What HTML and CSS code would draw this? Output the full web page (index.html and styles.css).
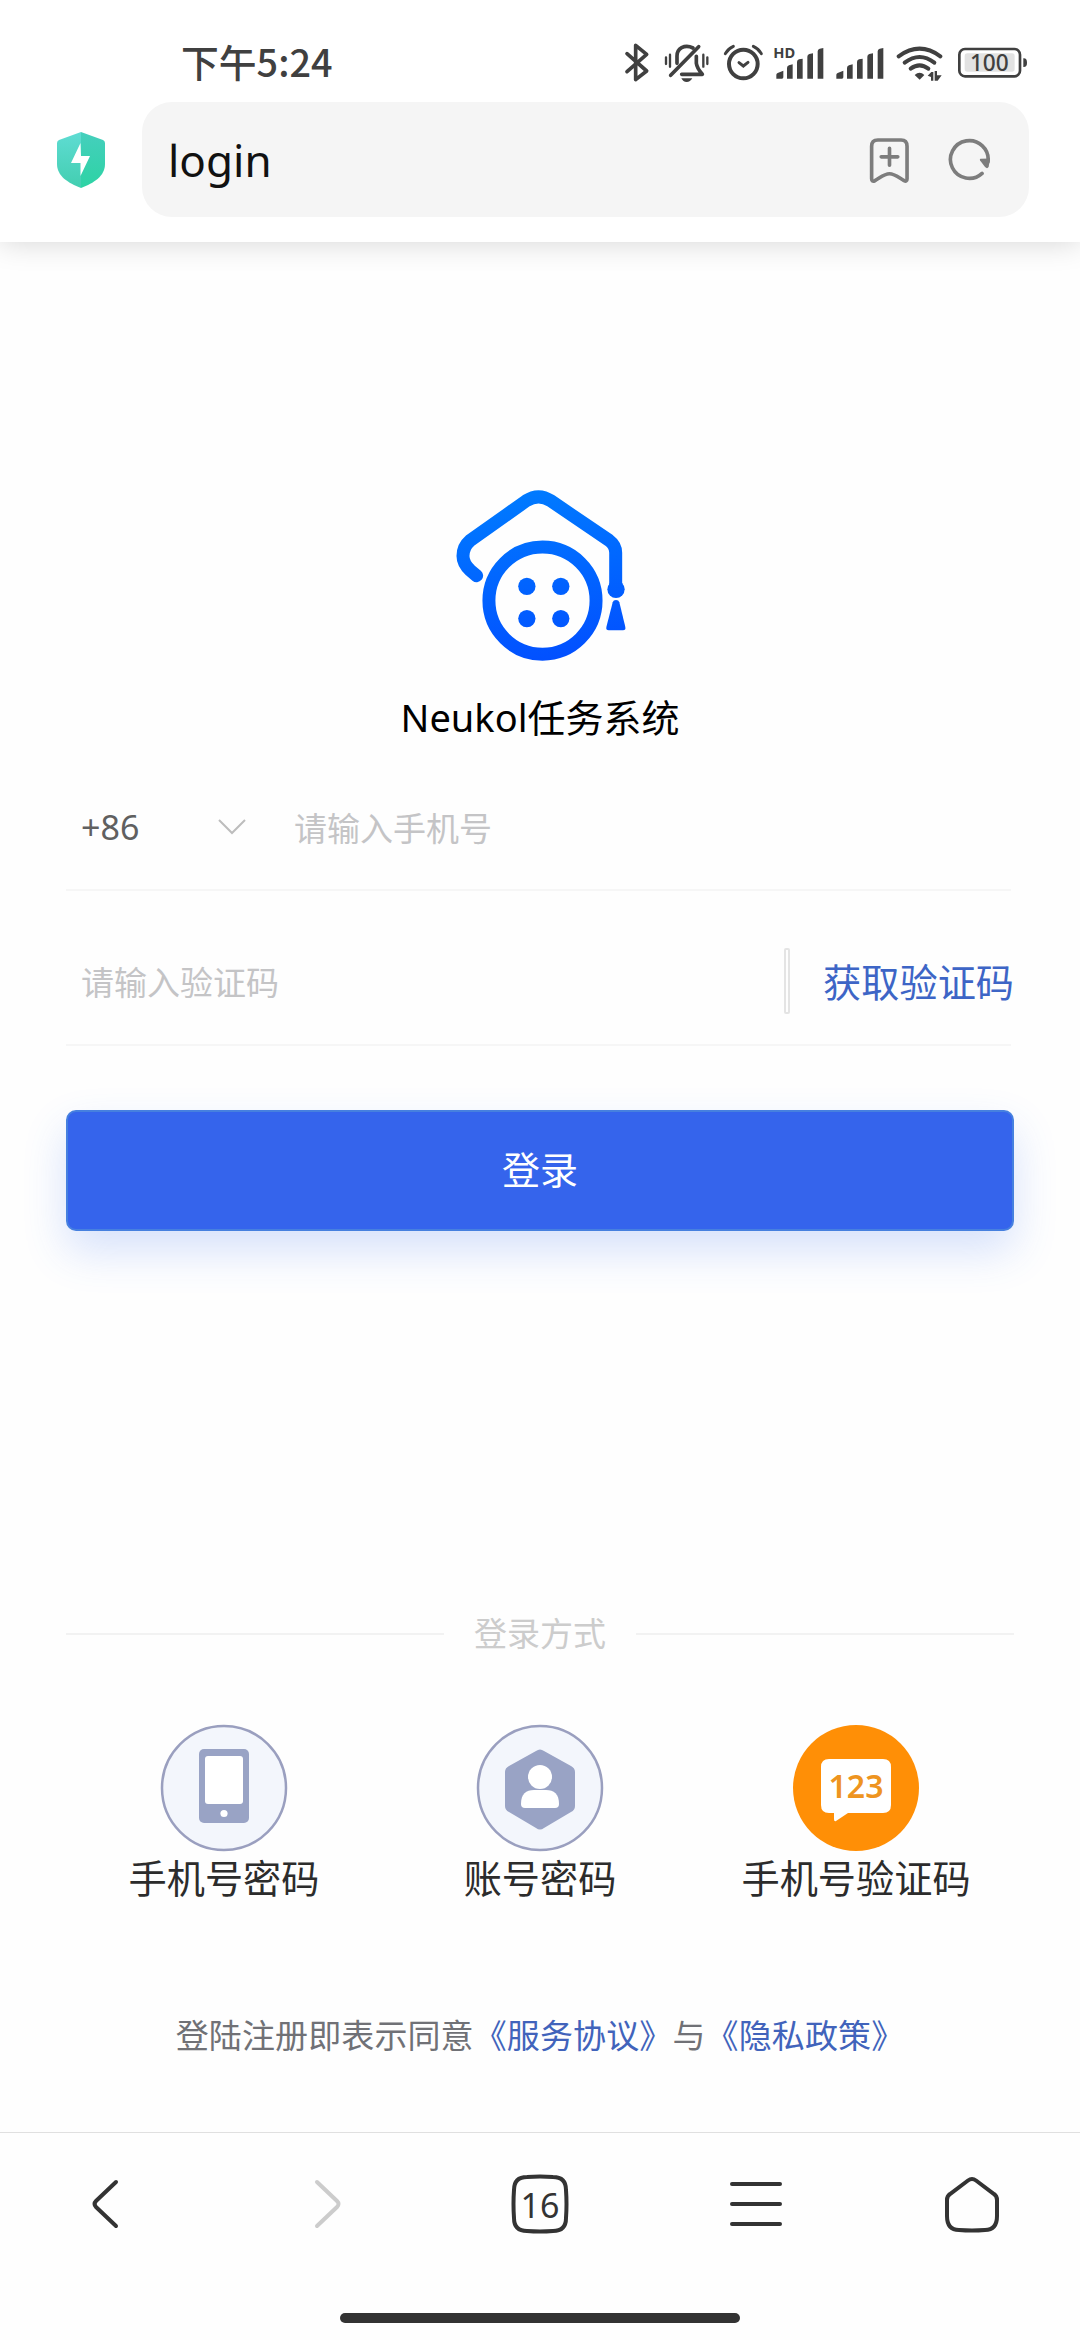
FILE: index.html
```html
<!DOCTYPE html>
<html lang="zh-CN">
<head>
<meta charset="utf-8">
<title>login</title>
<link rel="stylesheet" href="styles.css">
</head>
<body>
<header class="header">
  <div class="status">
    <span class="time">下午5:24</span>
    <div class="status-icons">
      <svg class="ic-bt" viewBox="73 64 78 123" width="26" height="41"><path d="M82 99L141 151L108 177V74L141 101L82 153" fill="none" stroke="#404040" stroke-width="11" stroke-linejoin="round" stroke-linecap="round"/></svg>
      <svg class="ic-bell" viewBox="193 64 138 123" width="46" height="41"><g fill="none" stroke="#404040" stroke-width="11" stroke-linecap="round"><path d="M297 78L213 164"/><path d="M280 82Q262 73 246 81Q232 89 232 106V128"/><path d="M290 107V128Q292 143 308 161H246" stroke-linejoin="round"/></g><path d="M245 173H278Q272 184 261 184T245 173Z" fill="#404040"/><path d="M199 110V130M211 102V138M311 102V138M323 110V130" stroke="#404040" stroke-width="7" stroke-linecap="round"/></svg>
      <svg class="ic-alarm" viewBox="370 64 123 123" width="41" height="41"><g fill="none" stroke="#404040" stroke-linecap="round"><circle cx="431" cy="130" r="43" stroke-width="12"/><path d="M418 126L431 136L445 125" stroke-width="9"/><path d="M377 99Q385 84 401 77M485 99Q477 84 461 77" stroke-width="9"/></g></svg>
      <svg class="ic-hd" viewBox="520 64 153 123" width="51" height="41"><text x="521" y="113" class="hd-text">HD</text><path d="M530 174V162Q530 159 534 157L551 150V170Q551 174 547 174ZM562 174V142Q562 136 568 134L579 131V174ZM592 174V124Q592 118 598 116L609 114V174ZM623 174V108Q623 102 629 100L640 98V174ZM654 174V92Q654 86 660 84L671 82V174Z" fill="#404040"/></svg>
      <svg class="ic-signal" viewBox="706 64 147 123" width="49" height="41"><path d="M710 174V162Q710 159 714 157L731 150V170Q731 174 727 174ZM742 174V142Q742 136 748 134L759 131V174ZM772 174V124Q772 118 778 116L789 114V174ZM803 174V108Q803 102 809 100L820 98V174ZM834 174V92Q834 86 840 84L851 82V174Z" fill="#404040"/></svg>
      <svg class="ic-wifi" viewBox="889 64 144 123" width="48" height="41"><g fill="none" stroke="#404040" stroke-width="12" stroke-linecap="round"><path d="M897 107Q960 61 1022 107"/><path d="M915 126Q960 92 1004 126"/><path d="M933 144Q960 124 986 144"/></g><path d="M945 163Q960 150 974 163L960 177Z" fill="#404040"/><path d="M984 165L995 154H1001V180H994V169ZM1005 151H1012V164H1026L1014 180H1005Z" fill="#404040"/></svg>
      <svg class="ic-battery" viewBox="1070 64 216 123" width="72" height="41"><rect x="1077" y="85" width="182" height="82" rx="17" fill="none" stroke="#404040" stroke-width="8"/><rect x="1093" y="98" width="150" height="55" rx="8" fill="#e2e2e2"/><path d="M1269 113Q1280 112 1280 126T1269 139Z" fill="#404040"/><text x="1167" y="152" text-anchor="middle" class="battery-text">100</text></svg>
    </div>
  </div>
  <div class="address">
    <svg class="shield" viewBox="0 0 50 58" width="50" height="58"><defs><linearGradient id="sl" x1="0" y1="0" x2="0" y2="1"><stop offset="0" stop-color="#5fdcd3"/><stop offset="1" stop-color="#43ceb0"/></linearGradient><linearGradient id="sr" x1="0" y1="0" x2="0" y2="1"><stop offset="0" stop-color="#45cfbd"/><stop offset="1" stop-color="#2dd3a4"/></linearGradient></defs><path d="M25 1L3 9Q1 10 1 12V33C1 45 12 52 25 57Z" fill="url(#sl)"/><path d="M25 1L47 9Q49 10 49 12V33C49 45 38 52 25 57Z" fill="url(#sr)"/><path d="M24.5 12L15 32H24.500V45L34 25H25Z" fill="#fff"/></svg>
    <div class="url">
      <span class="url-text">login</span>
      <svg viewBox="800 345 128 145" width="43" height="48"><path d="M810 376Q810 357 829 357H899Q917 357 917 376V474Q917 484 908 480C892 471 880 459 864 459S836 471 820 480Q810 484 810 474ZM864 382V433M839 408H889" fill="none" stroke="#7d7d7d" stroke-width="11" stroke-linecap="round" stroke-linejoin="round"/></svg>
      <svg class="reload" viewBox="1036 352 136 136" width="45" height="45"><path d="M1142 462A57 57 0 1 1 1160 427" fill="none" stroke="#7d7d7d" stroke-width="11" stroke-linecap="round"/><path d="M1137 418L1166 417L1162 442Q1158 450 1151 443L1136 423Q1134 419 1137 418Z" fill="#7d7d7d"/></svg>
    </div>
  </div>
</header>
<main class="page">
  <svg class="logo" viewBox="220 50 520 531" width="173" height="177"><defs><linearGradient id="lg" gradientUnits="userSpaceOnUse" x1="400" y1="60" x2="480" y2="575"><stop offset="0" stop-color="#007bff"/><stop offset="1" stop-color="#0250ff"/></linearGradient></defs><g fill="none" stroke="url(#lg)" stroke-width="39" stroke-linecap="round"><path d="M288 316L269 300Q247 280 247 257Q247 229 268 211L437 91Q474 67 511 91L686 210Q706 225 706 247V355"/><circle cx="486" cy="391" r="161"/></g><g fill="url(#lg)"><circle cx="439" cy="348" r="26"/><circle cx="541" cy="348" r="26"/><circle cx="439" cy="445" r="26"/><circle cx="541" cy="445" r="26"/><circle cx="707" cy="357" r="26"/><path d="M697 396Q699 389 707 389T717 396L735 470Q737 480 728 480H685Q676 480 678 470Z"/></g></svg>
  <h1 class="title">Neukol任务系统</h1>
  <form class="form">
    <div class="row">
      <span class="code">+86</span>
      <svg class="chevron" viewBox="0 0 30 17" width="30" height="17"><path d="M2 2L15 15L28 2" fill="none" stroke="#bdbdbd" stroke-width="2"/></svg>
      <span class="placeholder">请输入手机号</span>
    </div>
    <div class="row row-code">
      <span class="placeholder">请输入验证码</span>
      <span class="bar"></span>
      <a class="get-code">获取验证码</a>
    </div>
    <button class="submit" type="button">登录</button>
  </form>
  <div class="divider">登录方式</div>
  <div class="methods">
    <div class="method">
      <svg viewBox="0 0 128 128" width="128" height="128"><circle cx="64" cy="64" r="62" fill="#f3f6fc" stroke="#9a9fbf" stroke-width="2.500"/><rect x="39" y="25" width="50" height="74" rx="5" fill="#99a3c5"/><rect x="45" y="32" width="38" height="48" rx="3" fill="#fff"/><circle cx="64" cy="89.500" r="3.600" fill="#fff"/></svg>
      <span>手机号密码</span>
    </div>
    <div class="method">
      <svg viewBox="0 0 128 128" width="128" height="128"><circle cx="64" cy="64" r="62" fill="#f3f6fc" stroke="#9a9fbf" stroke-width="2.500"/><path d="M60 27Q64 24 68 27L95 42Q99 44 99 48V82Q99 86 95 88L68 104Q64 107 60 104L33 88Q29 86 29 82V48Q29 44 33 42Z" fill="#99a3c5"/><circle cx="64" cy="53" r="12" fill="#fff"/><path d="M45 80C45 70 50 66 58 66H70C78 66 83 70 83 80Q83 84 79 84H49Q45 84 45 80Z" fill="#fff"/></svg>
      <span>账号密码</span>
    </div>
    <div class="method">
      <svg viewBox="0 0 128 128" width="128" height="128"><circle cx="64" cy="64" r="63" fill="#ff8f06"/><path d="M37 35H91Q99 35 99 43V81Q99 89 91 89H56L44 97Q42 98 42 95V89H37Q29 89 29 81V43Q29 35 37 35Z" fill="#fff"/><text x="64" y="74" text-anchor="middle" class="digits">123</text></svg>
      <span>手机号验证码</span>
    </div>
  </div>
  <p class="terms">登陆注册即表示同意<a>《服务协议》</a>与<a>《隐私政策》</a></p>
</main>
<nav class="nav">
  <div class="tabs">
    <svg viewBox="0 0 60 60" width="60" height="60"><path d="M38 8L18 27Q15 30 18 33L38 52" fill="none" stroke="#333" stroke-width="4" stroke-linecap="round"/></svg>
    <svg viewBox="0 0 60 60" width="60" height="60"><path d="M23 8L43 27Q46 30 43 33L23 52" fill="none" stroke="#ccc" stroke-width="4" stroke-linecap="round"/></svg>
    <svg viewBox="0 0 60 60" width="60" height="60"><path d="M4 16Q4 3 17 3Q30 2 43 3Q56 3 56 16Q57 30 56 44Q56 57 43 57Q30 58 17 57Q4 57 4 44Q3 30 4 16Z" fill="none" stroke="#333" stroke-width="4"/><text x="30" y="43.500" text-anchor="middle" class="tab-count">16</text></svg>
    <svg viewBox="0 0 60 60" width="60" height="60"><path d="M6 10H54M6 30H54M6 50H54" stroke="#333" stroke-width="4" stroke-linecap="round"/></svg>
    <svg viewBox="0 0 60 60" width="60" height="60"><path d="M26 6.500Q30 3.500 34 6.500L52 20Q55 22 55 26V42Q55 56 43 56Q30 57 17 56Q5 56 5 42V26Q5 22 8 20Z" fill="none" stroke="#333" stroke-width="4"/></svg>
  </div>
  <div class="home-bar"></div>
</nav>
</body>
</html>
```
FILE: styles.css
```css
* { box-sizing: border-box; }
body {
  margin: 0;
  width: 1080px;
  height: 2340px;
  display: flex;
  flex-direction: column;
  background: #fefefe;
  color: #000;
  font-family: "Noto Sans", "Noto Sans CJK SC", sans-serif;
  overflow: hidden;
}
svg { display: block; flex: none; }

.header {
  height: 242px;
  background: #fff;
  box-shadow: 0 0 28px rgba(0, 0, 0, .17);
}
.status {
  height: 102px;
  padding: 22px 51px 0 181px;
  display: flex;
  justify-content: space-between;
  align-items: center;
}
.time {
  padding-bottom: 3px;
  font: 500 37.8px/44px "Noto Sans CJK SC", sans-serif;
  color: #404040;
}
.status-icons { display: flex; }
.ic-bell { margin-left: 14px; }
.ic-alarm { margin-left: 13px; }
.ic-hd { margin-left: 9px; }
.ic-signal { margin-left: 11px; }
.ic-wifi { margin-left: 12px; }
.ic-battery { margin-left: 13px; }
.hd-text { font: 700 44px "Noto Sans", sans-serif; fill: #404040; }
.battery-text { font: 500 68px "Noto Sans", sans-serif; fill: #404040; }

.address {
  display: flex;
  align-items: center;
  padding: 0 51px 0 56px;
}
.url {
  flex: 1;
  height: 115px;
  margin-left: 36px;
  padding: 0 37px 0 26px;
  border-radius: 30px;
  background: #f5f5f5;
  display: flex;
  align-items: center;
}
.url-text { flex: 1; font-size: 44px; color: #111; }
.reload { margin-left: 36px; }

.page {
  flex: 1;
  padding: 245px 66px 0;
  display: flex;
  flex-direction: column;
}
.logo { align-self: center; }
.title {
  margin: 29px 0 0;
  font-size: 38px;
  font-weight: 400;
  line-height: 48px;
  text-align: center;
}
.row {
  height: 123px;
  margin-top: 27px;
  margin-right: 3px;
  padding: 0 0 3px 15px;
  border-bottom: 2px solid #f6f6f6;
  display: flex;
  align-items: center;
}
.row-code { height: 126px; margin-top: 29px; }
.code { width: 136px; font-size: 34px; color: #606060; }
.chevron { margin-top: -2px; }
.chevron + .placeholder { margin-left: 47px; }
.placeholder { flex: 1; font-size: 33px; color: #c4c4c6; }
.bar {
  width: 6px;
  height: 66px;
  border: 2px solid #e4e4e4;
  border-radius: 2px;
}
.get-code {
  margin: 0 -3px 0 33px;
  font-size: 38.2px;
  color: #3d65c6;
}
.submit {
  display: block;
  width: 100%;
  height: 121px;
  margin-top: 64px;
  padding: 0 0 6px;
  border: 2px solid #4680df;
  border-radius: 10px;
  background: #3564ec;
  box-shadow: 0 20px 44px rgba(53, 110, 240, .2);
  color: #fff;
  font: 400 38px/1 "Noto Sans CJK SC", sans-serif;
}
.divider {
  margin-top: 381px;
  display: flex;
  align-items: center;
  gap: 30px;
  font-size: 33px;
  line-height: 44px;
  color: #ccc;
}
.divider::before, .divider::after {
  content: "";
  flex: 1;
  height: 2px;
  background: #f2f2f2;
}
.methods { display: flex; margin-top: 68px; }
.method {
  flex: 1;
  display: flex;
  flex-direction: column;
  align-items: center;
  gap: 3px;
  font-size: 38.2px;
  line-height: 46px;
  color: #2c2c2c;
}
.digits { font: 600 32px "Noto Sans", sans-serif; fill: #ee9420; }
.terms {
  margin: 112px -10px 0;
  font-size: 33px;
  line-height: 46px;
  letter-spacing: .12px;
  text-align: center;
  color: #707176;
}
.terms a { color: #4163bb; }

.nav {
  height: 208px;
  border-top: 1px solid #e0e0e0;
}
.tabs {
  height: 142px;
  display: grid;
  grid-template-columns: repeat(5, 1fr);
  align-items: center;
  justify-items: center;
}
.tab-count { font: 400 34px "Noto Sans", sans-serif; fill: #333; }
.home-bar {
  width: 400px;
  height: 10px;
  margin: 38px auto 0;
  border-radius: 5px;
  background: #333;
}
```
